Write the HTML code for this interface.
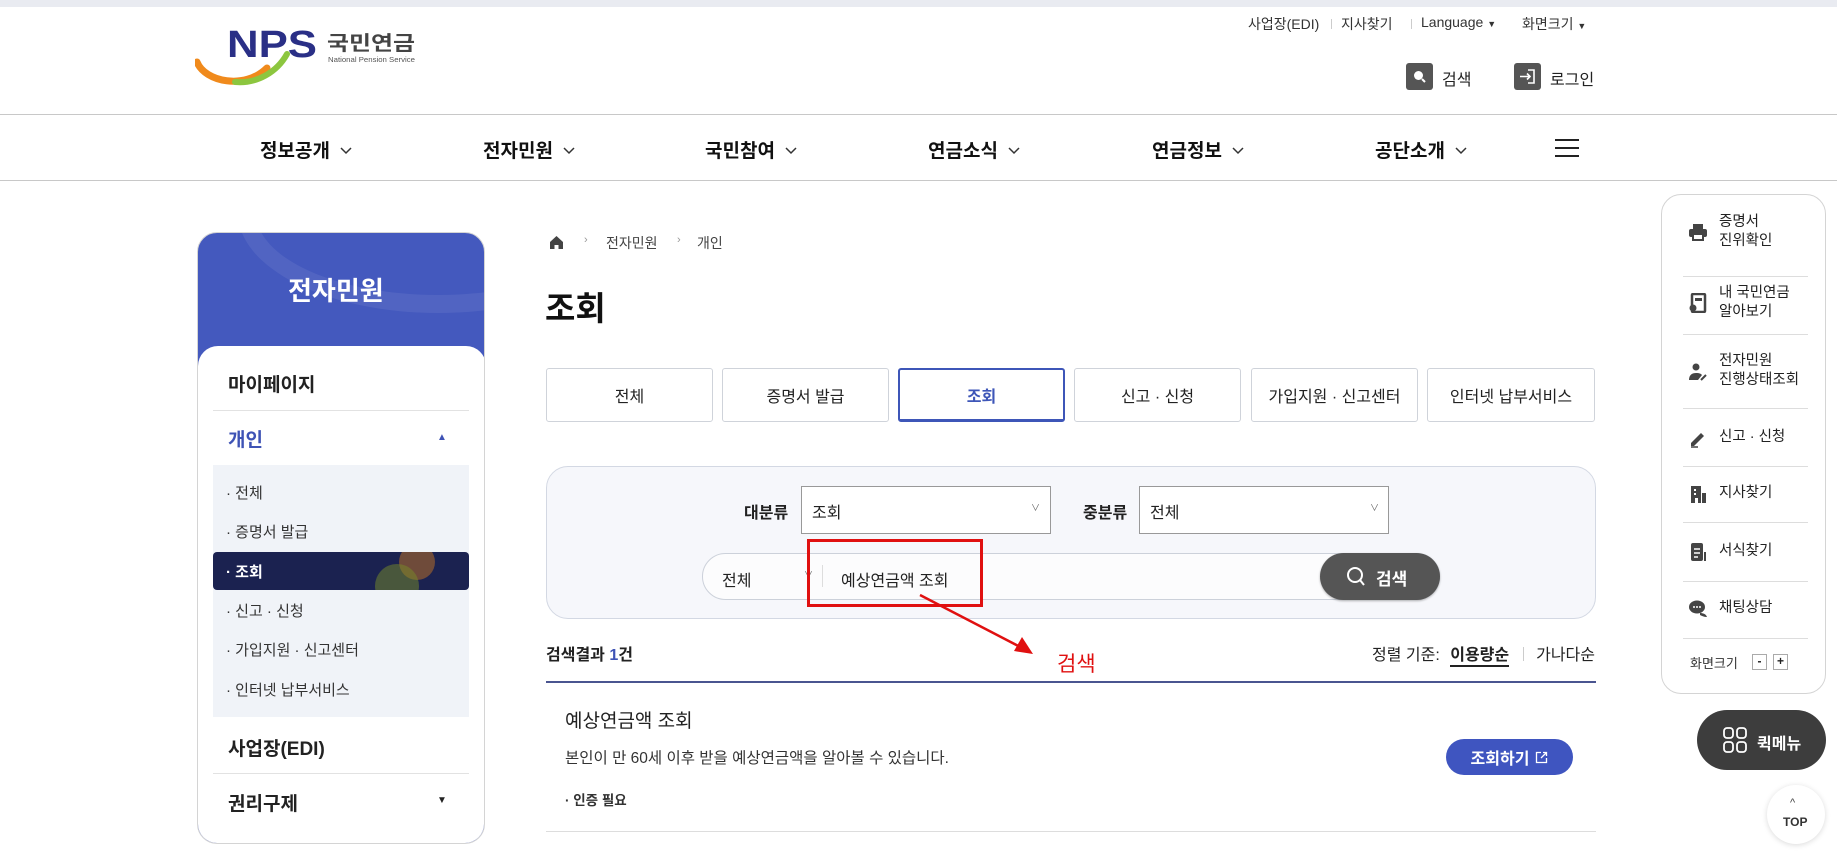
<!DOCTYPE html>
<html><head><meta charset="utf-8"><style>
*{margin:0;padding:0;box-sizing:border-box}
body{width:1837px;height:861px;position:relative;overflow:hidden;background:#fff;font-family:"Liberation Sans","Noto Sans CJK KR",sans-serif;color:#222}
.a{position:absolute;white-space:nowrap}
.util{top:14px;font-size:14px;color:#333}
.nav{top:136px;font-size:19px;font-weight:bold;color:#111}
.nav svg{margin-left:10px;vertical-align:2px}
.sub{left:226px;font-size:15px;color:#333}
.tab{top:368px;width:167px;height:54px;border:1px solid #cfd3da;border-radius:3px;font-size:16px;color:#222;display:flex;align-items:center;justify-content:center;background:#fff}
.qi{left:1719px;font-size:14.5px;color:#222;line-height:19px}
.qs{left:1683px;width:125px;height:1px;background:#ddd}
.ic{left:1688px;width:20px;height:20px}
</style></head><body>
<div class="a" style="left:0;top:0;width:1837px;height:7px;background:#e9ebf1"></div>

<!-- logo -->
<svg class="a" style="left:195px;top:26px" width="230" height="64" viewBox="0 0 230 64">
<path d="M2 36 C10 56 50 64 72 42" stroke="#f08a1c" stroke-width="7" fill="none" stroke-linecap="round"/>
<path d="M40 56 C62 58 82 46 92 28" stroke="#8cc63f" stroke-width="6" fill="none" stroke-linecap="round"/>
<text x="32" y="31" font-family="Liberation Sans" font-weight="bold" font-size="38" fill="#2a2f86" textLength="90" lengthAdjust="spacingAndGlyphs">NPS</text>
<text x="132" y="24" font-family="Noto Sans CJK KR" font-weight="bold" font-size="20" fill="#444" textLength="88" lengthAdjust="spacingAndGlyphs">국민연금</text>
<text x="133" y="36" font-family="Liberation Sans" font-size="7.5" fill="#555" textLength="87" lengthAdjust="spacingAndGlyphs">National Pension Service</text>
</svg>

<div class="a util" style="left:1248px">사업장(EDI)</div>
<div class="a" style="left:1331px;top:19px;width:1px;height:10px;background:#ccc"></div>
<div class="a util" style="left:1341px">지사찾기</div>
<div class="a" style="left:1411px;top:19px;width:1px;height:10px;background:#ccc"></div>
<div class="a util" style="left:1421px">Language <span style="font-size:9px">▼</span></div>
<div class="a util" style="left:1522px">화면크기 <span style="font-size:9px">▼</span></div>

<div class="a" style="left:1406px;top:63px;width:27px;height:27px;background:#555;border-radius:3px"></div>
<svg class="a" style="left:1411px;top:68px" width="17" height="17" viewBox="0 0 17 17"><circle cx="7.5" cy="7.5" r="4.5" fill="#fff"/><path d="M11 11l3 3" stroke="#fff" stroke-width="2"/></svg>
<div class="a" style="left:1442px;top:66px;font-size:16px">검색</div>
<div class="a" style="left:1514px;top:63px;width:27px;height:27px;background:#555;border-radius:3px"></div>
<svg class="a" style="left:1514px;top:63px" width="27" height="27" viewBox="0 0 27 27"><path d="M14 7h6v13h-6" stroke="#fff" stroke-width="1.6" fill="none"/><path d="M6 13.5h10M13 10.5l3 3-3 3" stroke="#fff" stroke-width="1.6" fill="none"/></svg>
<div class="a" style="left:1550px;top:66px;font-size:16px">로그인</div>

<div class="a" style="left:0;top:114px;width:1837px;height:1px;background:#c8c8c8"></div>
<div class="a" style="left:0;top:180px;width:1837px;height:1px;background:#c8c8c8"></div>
<div class="a nav" style="left:260px">정보공개<svg width="12" height="8"><path d="M1 1l5 5 5-5" stroke="#333" stroke-width="1.5" fill="none"/></svg></div>
<div class="a nav" style="left:483px">전자민원<svg width="12" height="8"><path d="M1 1l5 5 5-5" stroke="#333" stroke-width="1.5" fill="none"/></svg></div>
<div class="a nav" style="left:705px">국민참여<svg width="12" height="8"><path d="M1 1l5 5 5-5" stroke="#333" stroke-width="1.5" fill="none"/></svg></div>
<div class="a nav" style="left:928px">연금소식<svg width="12" height="8"><path d="M1 1l5 5 5-5" stroke="#333" stroke-width="1.5" fill="none"/></svg></div>
<div class="a nav" style="left:1152px">연금정보<svg width="12" height="8"><path d="M1 1l5 5 5-5" stroke="#333" stroke-width="1.5" fill="none"/></svg></div>
<div class="a nav" style="left:1375px">공단소개<svg width="12" height="8"><path d="M1 1l5 5 5-5" stroke="#333" stroke-width="1.5" fill="none"/></svg></div>
<svg class="a" style="left:1555px;top:138px" width="24" height="20"><path d="M0 2h24M0 10h24M0 18h24" stroke="#222" stroke-width="2"/></svg>

<!-- sidebar -->
<div class="a" style="left:197px;top:232px;width:288px;height:612px;border:1px solid #d4d4d4;border-radius:20px;overflow:hidden;background:#4459be">
 <div style="position:absolute;left:40px;top:-120px;width:400px;height:200px;border-radius:50%;border:18px solid rgba(255,255,255,.07)"></div>
 <div style="position:absolute;left:0;top:113px;width:288px;height:520px;background:#fff;border-radius:20px 20px 0 0"></div>
</div>
<div class="a" style="left:288px;top:271px;font-size:26px;font-weight:bold;color:#fff">전자민원</div>
<div class="a" style="left:228px;top:370px;font-size:19px;font-weight:bold">마이페이지</div>
<div class="a" style="left:213px;top:410px;width:256px;height:1px;background:#e2e2e2"></div>
<div class="a" style="left:228px;top:425px;font-size:19px;font-weight:bold;color:#3e53b5">개인</div>
<div class="a" style="left:437px;top:432px;font-size:10px;color:#3e53b5">▲</div>
<div class="a" style="left:213px;top:465px;width:256px;height:252px;background:#f0f3f8"></div>
<div class="a sub" style="top:482px">· 전체</div>
<div class="a sub" style="top:521px">· 증명서 발급</div>
<div class="a" style="left:213px;top:552px;width:256px;height:38px;background:#1b2250;border-radius:4px;overflow:hidden">
 <div style="position:absolute;left:186px;top:-8px;width:36px;height:36px;border-radius:50%;background:rgba(180,110,40,.55)"></div>
 <div style="position:absolute;left:162px;top:12px;width:44px;height:44px;border-radius:50%;background:rgba(120,140,40,.5)"></div>
</div>
<div class="a sub" style="top:561px;color:#fff;font-weight:bold">· 조회</div>
<div class="a sub" style="top:600px">· 신고 · 신청</div>
<div class="a sub" style="top:639px">· 가입지원 · 신고센터</div>
<div class="a sub" style="top:679px">· 인터넷 납부서비스</div>
<div class="a" style="left:228px;top:734px;font-size:19px;font-weight:bold">사업장(EDI)</div>
<div class="a" style="left:213px;top:773px;width:256px;height:1px;background:#e2e2e2"></div>
<div class="a" style="left:228px;top:789px;font-size:19px;font-weight:bold">권리구제</div>
<div class="a" style="left:437px;top:795px;font-size:10px">▼</div>

<!-- main -->
<svg class="a" style="left:549px;top:235px" width="15" height="15" viewBox="0 0 15 15"><path d="M1 7L7.5 1 14 7v7H9.5v-4h-4v4H1z" fill="#444"/></svg>
<div class="a" style="left:584px;top:234px;font-size:11px;color:#999">›</div>
<div class="a" style="left:606px;top:233px;font-size:14px;color:#444">전자민원</div>
<div class="a" style="left:677px;top:234px;font-size:11px;color:#999">›</div>
<div class="a" style="left:697px;top:233px;font-size:14px;color:#444">개인</div>
<div class="a" style="left:545px;top:282px;font-size:33px;font-weight:bold;color:#111">조회</div>

<div class="a tab" style="left:546px">전체</div>
<div class="a tab" style="left:722px">증명서 발급</div>
<div class="a tab" style="left:898px;border:2px solid #3e56b8;border-bottom-width:3px;color:#3e56b8;font-weight:bold">조회</div>
<div class="a tab" style="left:1074px">신고 · 신청</div>
<div class="a tab" style="left:1251px">가입지원 · 신고센터</div>
<div class="a tab" style="left:1427px;width:168px">인터넷 납부서비스</div>

<div class="a" style="left:546px;top:466px;width:1050px;height:153px;background:#f6f7fb;border:1px solid #d3d8e3;border-radius:22px"></div>
<div class="a" style="left:744px;top:499px;font-size:16px;font-weight:bold">대분류</div>
<div class="a" style="left:801px;top:486px;width:250px;height:48px;background:#fff;border:1px solid #999"></div>
<div class="a" style="left:812px;top:499px;font-size:16px">조회</div>
<div class="a" style="left:1031px;top:501px;font-size:9px;color:#666">∨</div>
<div class="a" style="left:1083px;top:499px;font-size:16px;font-weight:bold">중분류</div>
<div class="a" style="left:1139px;top:486px;width:250px;height:48px;background:#fff;border:1px solid #999"></div>
<div class="a" style="left:1150px;top:499px;font-size:16px">전체</div>
<div class="a" style="left:1370px;top:501px;font-size:9px;color:#666">∨</div>

<div class="a" style="left:702px;top:553px;width:738px;height:47px;background:#fcfcfd;border:1px solid #ccd1da;border-radius:24px"></div>
<div class="a" style="left:722px;top:567px;font-size:16px">전체</div>
<div class="a" style="left:804px;top:568px;font-size:9px;color:#666">∨</div>
<div class="a" style="left:822px;top:565px;width:1px;height:22px;background:#ddd"></div>
<div class="a" style="left:841px;top:567px;font-size:16px">예상연금액 조회</div>
<div class="a" style="left:1320px;top:553px;width:120px;height:47px;background:#555;border-radius:24px;box-shadow:0 1px 2px rgba(0,0,0,.3)"></div>
<svg class="a" style="left:1346px;top:566px" width="20" height="22" viewBox="0 0 20 22"><circle cx="9" cy="9" r="7" stroke="#fff" stroke-width="2" fill="none"/><path d="M14 14l4 5" stroke="#fff" stroke-width="2"/></svg>
<div class="a" style="left:1376px;top:565px;font-size:17px;font-weight:bold;color:#fff">검색</div>

<div class="a" style="left:807px;top:539px;width:176px;height:68px;border:3px solid #e01010"></div>
<svg class="a" style="left:910px;top:585px" width="130" height="80"><path d="M10 10L118 66" stroke="#e01010" stroke-width="2.5"/><path d="M123 69L104 66 112 52z" fill="#e01010"/></svg>
<div class="a" style="left:1057px;top:648px;font-size:21px;color:#e01010">검색</div>

<div class="a" style="left:546px;top:641px;font-size:16px;font-weight:bold">검색결과 <span style="color:#3e53b5">1</span>건</div>
<div class="a" style="left:1372px;top:641px;font-size:16px">정렬 기준: <b style="border-bottom:2px solid #222;padding-bottom:1px;margin-left:6px">이용량순</b><span style="display:inline-block;width:1px;height:14px;background:#ccc;margin:0 12px 0 14px;vertical-align:-1px"></span>가나다순</div>
<div class="a" style="left:546px;top:681px;width:1050px;height:2px;background:#4a5590"></div>
<div class="a" style="left:565px;top:706px;font-size:19px">예상연금액 조회</div>
<div class="a" style="left:565px;top:746px;font-size:15.5px;color:#333">본인이 만 60세 이후 받을 예상연금액을 알아볼 수 있습니다.</div>
<div class="a" style="left:565px;top:789px;font-size:13.5px;font-weight:bold;color:#333">· 인증 필요</div>
<div class="a" style="left:1446px;top:739px;width:127px;height:36px;background:#3f55c0;border-radius:18px;color:#fff;font-size:16px;font-weight:bold;display:flex;align-items:center;justify-content:center">조회하기 <svg style="margin-left:6px" width="13" height="13"><path d="M6 1.5H1.5v10h10V7M8 1.5h3.5V5M11.5 1.5L6 7" stroke="#fff" stroke-width="1.3" fill="none"/></svg></div>
<div class="a" style="left:546px;top:831px;width:1050px;height:1px;background:#ddd"></div>

<!-- quick panel -->
<div class="a" style="left:1661px;top:194px;width:165px;height:500px;border:1px solid #d4d4d4;border-radius:20px;background:#fff"></div>
<svg class="a ic" style="top:222px" viewBox="0 0 20 20"><rect x="5" y="2" width="10" height="5" fill="#444"/><rect x="1" y="7" width="18" height="8" rx="2" fill="#444"/><rect x="5" y="12" width="10" height="6" fill="#fff" stroke="#444" stroke-width="2"/></svg>
<div class="a qi" style="top:213px">증명서<br>진위확인</div>
<div class="a qs" style="top:276px"></div>
<svg class="a ic" style="top:293px" viewBox="0 0 20 20"><rect x="4" y="1" width="13" height="18" rx="1" fill="none" stroke="#444" stroke-width="2.5"/><rect x="7" y="5" width="7" height="3" fill="#444"/><circle cx="5" cy="15" r="3.5" fill="#444"/></svg>
<div class="a qi" style="top:284px">내 국민연금<br>알아보기</div>
<div class="a qs" style="top:334px"></div>
<svg class="a ic" style="top:362px" viewBox="0 0 20 20"><circle cx="8" cy="5" r="3.5" fill="#444"/><path d="M1 18c0-5 3-7 7-7s5 1 6 2l-4 5z" fill="#444"/><path d="M13 18l5-5" stroke="#444" stroke-width="2"/></svg>
<div class="a qi" style="top:352px">전자민원<br>진행상태조회</div>
<div class="a qs" style="top:408px"></div>
<svg class="a ic" style="top:428px" viewBox="0 0 20 20"><path d="M3 15l10-10 3 3-10 10H3z" fill="#444"/><path d="M3 19h7" stroke="#444" stroke-width="1.5"/></svg>
<div class="a qi" style="top:428px">신고 · 신청</div>
<div class="a qs" style="top:466px"></div>
<svg class="a ic" style="top:484px" viewBox="0 0 20 20"><rect x="3" y="2" width="10" height="17" fill="#444"/><rect x="14" y="9" width="4" height="10" fill="#444"/><rect x="6" y="5" width="2" height="2" fill="#fff"/><rect x="6" y="9" width="2" height="2" fill="#fff"/><rect x="7" y="14" width="3" height="5" fill="#fff"/></svg>
<div class="a qi" style="top:484px">지사찾기</div>
<div class="a qs" style="top:522px"></div>
<svg class="a ic" style="top:542px" viewBox="0 0 20 20"><rect x="3" y="1" width="12" height="18" rx="2" fill="#444"/><path d="M6 7h6M6 11h6M6 15h4" stroke="#fff" stroke-width="1.5"/><rect x="16" y="10" width="2" height="9" fill="#444"/></svg>
<div class="a qi" style="top:542px">서식찾기</div>
<div class="a qs" style="top:581px"></div>
<svg class="a ic" style="top:599px" viewBox="0 0 20 20"><ellipse cx="9" cy="8" rx="8" ry="6.5" fill="#444"/><circle cx="6" cy="8" r="1" fill="#fff"/><circle cx="9" cy="8" r="1" fill="#fff"/><circle cx="12" cy="8" r="1" fill="#fff"/><path d="M12 14c3 0 6 1 7 4-3 0-5-1-7-2z" fill="#444"/></svg>
<div class="a qi" style="top:599px">채팅상담</div>
<div class="a qs" style="top:638px"></div>
<div class="a" style="left:1690px;top:653px;font-size:13px;color:#333">화면크기</div>
<div class="a" style="left:1752px;top:654px;width:15px;height:16px;border:1px solid #aaa;font-size:12px;line-height:13px;text-align:center;font-weight:bold">-</div>
<div class="a" style="left:1773px;top:654px;width:15px;height:16px;border:1px solid #aaa;font-size:12px;line-height:13px;text-align:center;font-weight:bold">+</div>

<div class="a" style="left:1697px;top:710px;width:129px;height:60px;background:#3d3d3d;border-radius:30px"></div>
<svg class="a" style="left:1723px;top:727px" width="24" height="26" viewBox="0 0 24 26"><rect x="1" y="1" width="9" height="10" rx="3" stroke="#fff" stroke-width="1.8" fill="none"/><rect x="14" y="1" width="9" height="10" rx="3" stroke="#fff" stroke-width="1.8" fill="none"/><rect x="1" y="15" width="9" height="10" rx="3" stroke="#fff" stroke-width="1.8" fill="none"/><rect x="14" y="15" width="9" height="10" rx="3" stroke="#fff" stroke-width="1.8" fill="none"/></svg>
<div class="a" style="left:1757px;top:730px;font-size:16px;font-weight:bold;color:#fff">퀵메뉴</div>
<div class="a" style="left:1767px;top:785px;width:58px;height:59px;border-radius:50%;background:#fff;box-shadow:0 1px 6px rgba(0,0,0,.15)"></div>
<div class="a" style="left:1790px;top:797px;font-size:11px;color:#444">^</div>
<div class="a" style="left:1783px;top:815px;font-size:12px;color:#333;font-weight:bold">TOP</div>
</body></html>
